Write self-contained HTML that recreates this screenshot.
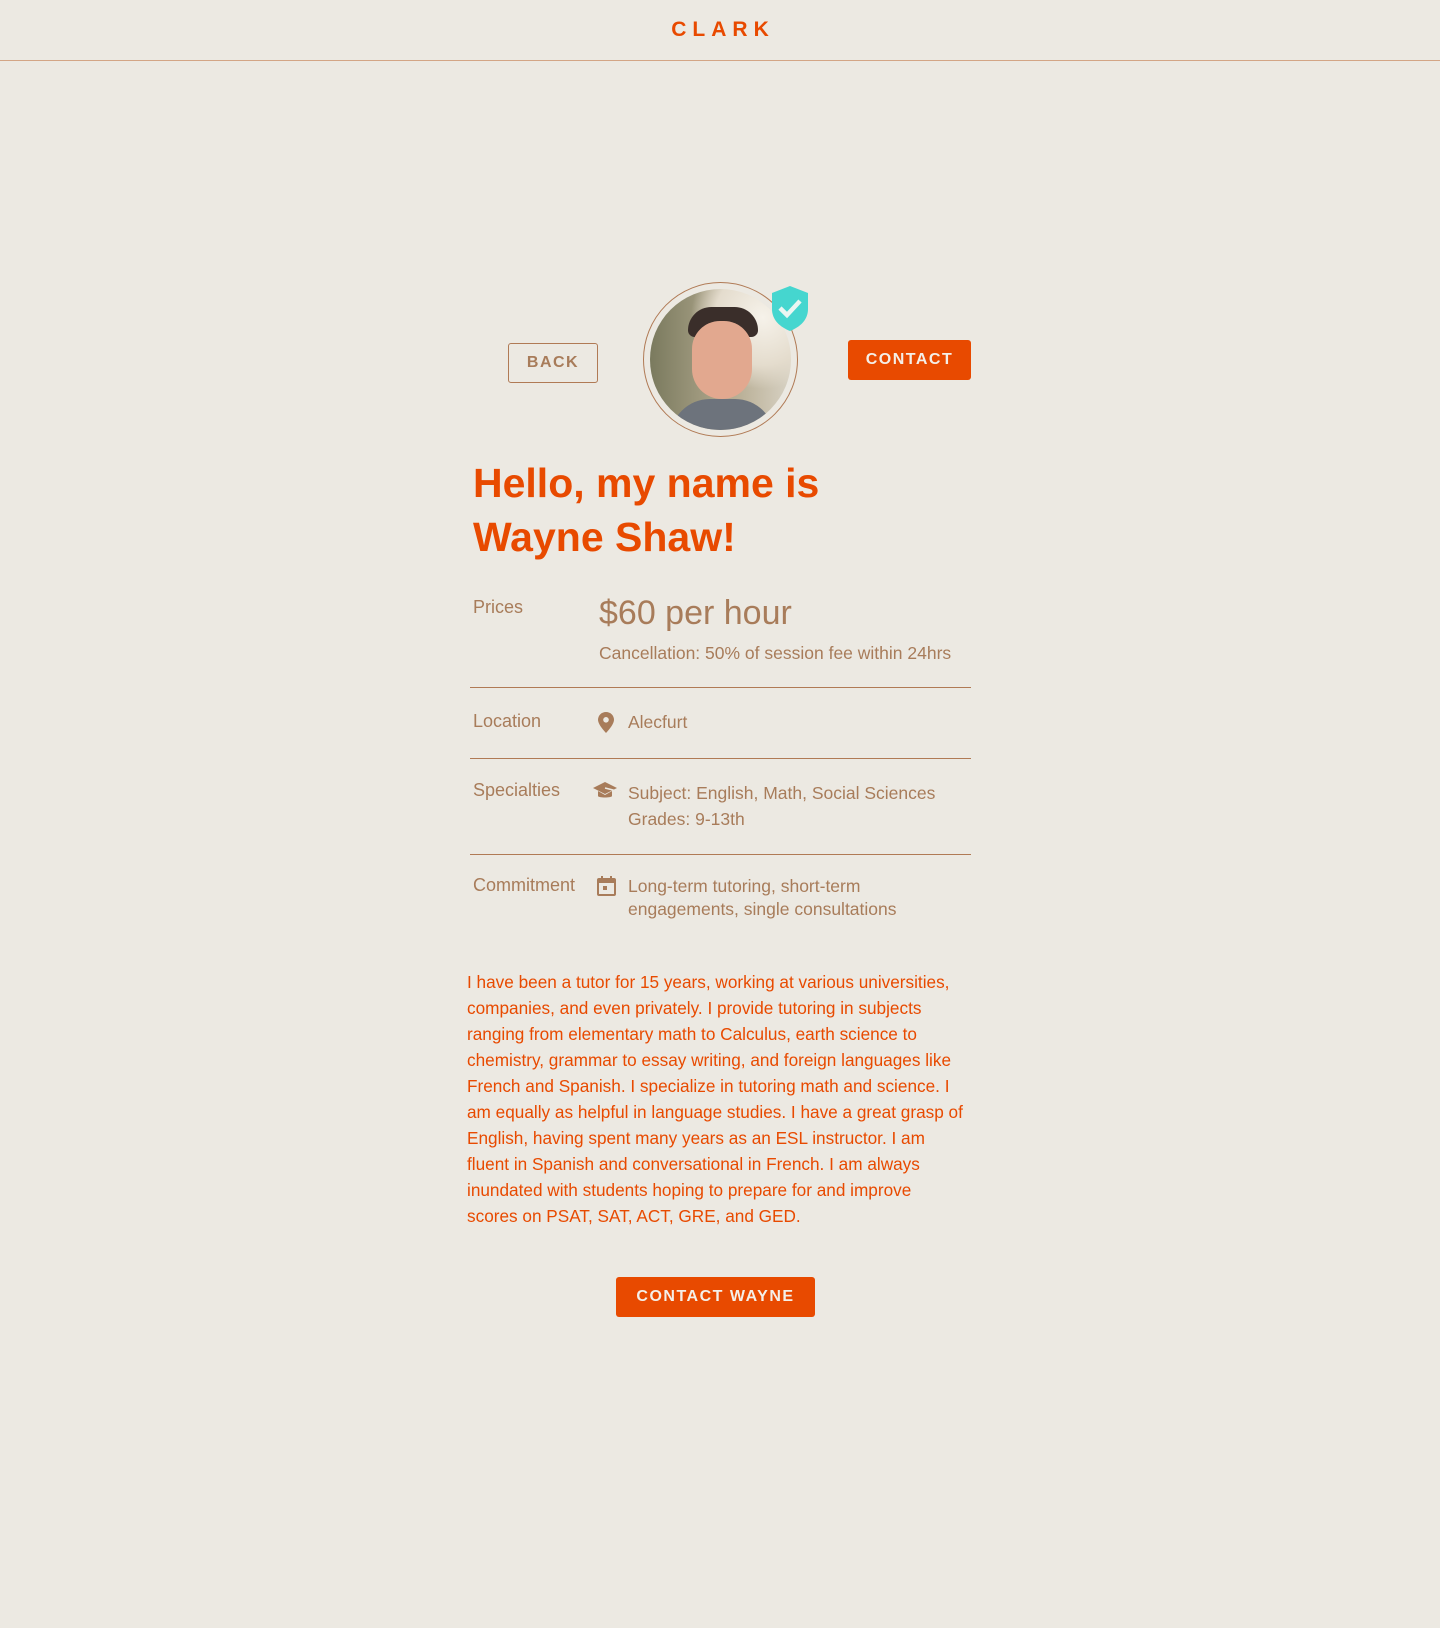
<!DOCTYPE html>
<html><head><meta charset="utf-8"><style>
*{margin:0;padding:0;box-sizing:border-box}
body{width:1440px;height:1628px;background:#ece9e2;font-family:"Liberation Sans",sans-serif;position:relative;overflow:hidden;color:#a87c5a}
.a{position:absolute;white-space:nowrap}
.hdr{position:absolute;left:0;top:0;width:1440px;height:61px;border-bottom:1px solid #d3a585}
.logo{left:0;width:1440px;text-align:center;top:18px;font-size:21px;font-weight:bold;letter-spacing:6px;color:#e84a00;padding-left:6px}
.btn{position:absolute;font-weight:bold;letter-spacing:1.5px;font-size:16px;display:flex;align-items:center;justify-content:center;border-radius:3px}
.line{position:absolute;left:470px;width:501px;height:1px;background:#b07a55}
.lbl{font-size:18px}
.val{font-size:17.5px}
</style></head><body>
<div class="hdr"></div>
<div class="a logo">CLARK</div>

<div class="btn" style="left:508px;top:343px;width:90px;height:40px;border:1.5px solid #b07a55;color:#a87c5a">BACK</div>
<div class="btn" style="left:848px;top:340px;width:123px;height:40px;background:#e84a00;color:#f4efe8">CONTACT</div>

<div style="position:absolute;left:643px;top:282px;width:155px;height:155px;border-radius:50%;border:1.5px solid #b07a55"></div>
<div style="position:absolute;left:650px;top:289px;width:141px;height:141px;border-radius:50%;overflow:hidden;background:radial-gradient(circle at 80% 20%,#f6f2ea 0,#e4dccd 30%,transparent 45%),linear-gradient(90deg,#7a7a5e,#b7ad93 60%,#d8d2c4)">
 <div style="position:absolute;left:38px;top:18px;width:70px;height:30px;border-radius:35px 35px 10px 10px;background:#3a2e2a"></div>
 <div style="position:absolute;left:42px;top:32px;width:60px;height:78px;border-radius:28px 28px 30px 30px;background:#e2a88f"></div>
 <div style="position:absolute;left:20px;top:110px;width:105px;height:50px;border-radius:40px 40px 0 0;background:#6d737c"></div>
</div>
<svg style="position:absolute;left:770px;top:285px" width="40" height="47" viewBox="0 0 40 47"><path d="M20 1 L38 8 V24 C38 35 30 42 20 46 C10 42 2 35 2 24 V8 Z" fill="#45d6cf"/><path d="M10 23 L17 30 L30 16" stroke="#eaf6f2" stroke-width="4.5" fill="none"/></svg>

<div class="a" style="left:473px;top:456px;font-size:41px;font-weight:bold;color:#e84a00;line-height:54px">Hello, my name is<br>Wayne Shaw!</div>

<div class="a lbl" style="left:473px;top:597px">Prices</div>
<div class="a" style="left:599px;top:594px;font-size:34px">$60 per hour</div>
<div class="a val" style="left:599px;top:643px">Cancellation: 50% of session fee within 24hrs</div>
<div class="line" style="top:687px"></div>

<div class="a lbl" style="left:473px;top:711px">Location</div>
<svg style="position:absolute;left:598px;top:712px" width="16" height="21" viewBox="0 0 16 21"><path d="M8 0C3.6 0 0 3.4 0 7.8 0 13 8 21 8 21s8-8 8-13.2C16 3.4 12.4 0 8 0z" fill="#a87c5a"/><circle cx="8" cy="7.8" r="2.8" fill="#ece9e2"/></svg>
<div class="a val" style="left:628px;top:712px">Alecfurt</div>
<div class="line" style="top:758px"></div>

<div class="a lbl" style="left:473px;top:780px">Specialties</div>
<svg style="position:absolute;left:593px;top:781px" width="24" height="20" viewBox="0 0 24 20"><path d="M12 1 L24 7 L12 13 L0 7Z" fill="#a87c5a"/><path d="M5 10 V15 C5 17 19 17 19 15 V10 L12 14Z" fill="#a87c5a"/><path d="M12 7 L20 9 V16" stroke="#ece9e2" stroke-width="1.5" fill="none"/></svg>
<div class="a val" style="left:628px;top:780px;line-height:26px">Subject: English, Math, Social Sciences<br>Grades: 9-13th</div>
<div class="line" style="top:854px"></div>

<div class="a lbl" style="left:473px;top:875px">Commitment</div>
<svg style="position:absolute;left:597px;top:876px" width="19" height="20" viewBox="0 0 19 20"><rect x="1" y="3" width="17" height="16" rx="1" fill="none" stroke="#a87c5a" stroke-width="2"/><rect x="1" y="3" width="17" height="4" fill="#a87c5a"/><rect x="4" y="0" width="2" height="4" fill="#a87c5a"/><rect x="13" y="0" width="2" height="4" fill="#a87c5a"/><rect x="6" y="10" width="4" height="4" fill="#a87c5a"/></svg>
<div class="a val" style="left:628px;top:875px;line-height:23px">Long-term tutoring, short-term<br>engagements, single consultations</div>

<div class="a" style="left:467px;top:969px;font-size:17.2px;line-height:26px;color:#e84a00">I have been a tutor for 15 years, working at various universities,<br>companies, and even privately. I provide tutoring in subjects<br>ranging from elementary math to Calculus, earth science to<br>chemistry, grammar to essay writing, and foreign languages like<br>French and Spanish. I specialize in tutoring math and science. I<br>am equally as helpful in language studies. I have a great grasp of<br>English, having spent many years as an ESL instructor. I am<br>fluent in Spanish and conversational in French. I am always<br>inundated with students hoping to prepare for and improve<br>scores on PSAT, SAT, ACT, GRE, and GED.</div>

<div class="btn" style="left:616px;top:1277px;width:199px;height:40px;background:#e84a00;color:#f4efe8">CONTACT WAYNE</div>
</body></html>
